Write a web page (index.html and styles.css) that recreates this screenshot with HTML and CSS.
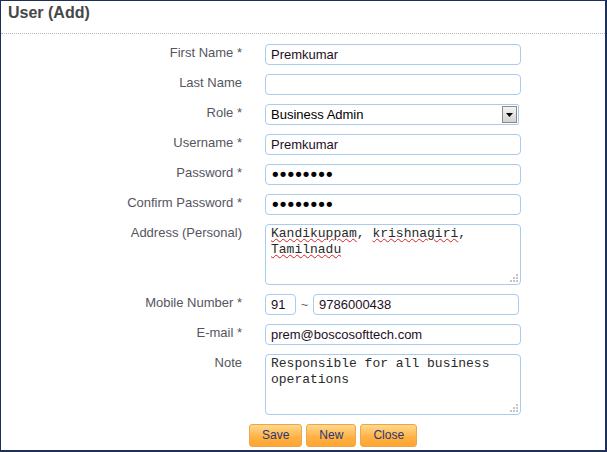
FILE: index.html
```html
<!DOCTYPE html>
<html>
<head>
<meta charset="utf-8">
<title>User (Add)</title>
<link rel="stylesheet" href="styles.css">
</head>
<body>
<div class="frame">
  <div class="header">User (Add)</div>
  <form class="form">
    <label class="lbl">First Name *</label>
    <div class="field"><input class="inp" type="text" value="Premkumar"></div>

    <label class="lbl">Last Name</label>
    <div class="field"><input class="inp" type="text" value=""></div>

    <label class="lbl">Role *</label>
    <div class="field">
      <div class="select"><span class="sel-text">Business Admin</span><span class="sel-btn"><svg width="7" height="4" viewBox="0 0 7 4"><path d="M0 0H7L3.5 4Z" fill="#000"/></svg></span></div>
    </div>

    <label class="lbl">Username *</label>
    <div class="field"><input class="inp" type="text" value="Premkumar"></div>

    <label class="lbl">Password *</label>
    <div class="field"><input class="inp pwd" type="password" value="premkuma"></div>

    <label class="lbl">Confirm Password *</label>
    <div class="field"><input class="inp pwd" type="password" value="premkuma"></div>

    <label class="lbl">Address (Personal)</label>
    <div class="field"><div class="area"><span class="sp">Kandikuppam</span>, <span class="sp">krishnagiri</span>,<br><span class="sp">Tamilnadu</span><span class="grip"><svg width="8" height="8" viewBox="0 0 8 8" fill="#c4c4c4"><rect x="6" y="0" width="2" height="2"/><rect x="3" y="3" width="2" height="2"/><rect x="6" y="3" width="2" height="2"/><rect x="0" y="6" width="2" height="2"/><rect x="3" y="6" width="2" height="2"/><rect x="6" y="6" width="2" height="2"/></svg></span></div></div>

    <label class="lbl">Mobile Number *</label>
    <div class="field mobile"><input class="inp cc" type="text" value="91"><span class="tilde">~</span><input class="inp num" type="text" value="9786000438"></div>

    <label class="lbl">E-mail *</label>
    <div class="field"><input class="inp" type="text" value="prem@boscosofttech.com"></div>

    <label class="lbl">Note</label>
    <div class="field"><div class="area">Responsible for all business<br>operations<span class="grip"><svg width="8" height="8" viewBox="0 0 8 8" fill="#c4c4c4"><rect x="6" y="0" width="2" height="2"/><rect x="3" y="3" width="2" height="2"/><rect x="6" y="3" width="2" height="2"/><rect x="0" y="6" width="2" height="2"/><rect x="3" y="6" width="2" height="2"/><rect x="6" y="6" width="2" height="2"/></svg></span></div></div>
  </form>
  <div class="buttons">
    <button class="btn" type="button">Save</button>
    <button class="btn" type="button">New</button>
    <button class="btn" type="button">Close</button>
  </div>
</div>
</body>
</html>
```

FILE: styles.css
```css
html, body {
  margin: 0;
  padding: 0;
  background: #fff;
}
body {
  font-family: "Liberation Sans", Arial, sans-serif;
}
.frame {
  width: 607px;
  height: 452px;
  box-sizing: border-box;
  border-style: solid;
  border-color: #1c3059;
  border-width: 1px 2px 2px 1px;
  overflow: hidden;
}
.header {
  height: 33px;
  box-sizing: border-box;
  padding: 2px 0 0 7px;
  font-size: 16px;
  line-height: 20px;
  font-weight: bold;
  color: #474747;
  border-bottom: 1px dotted #b8b8b8;
}
.form {
  display: grid;
  grid-template-columns: 241px 256px;
  column-gap: 23px;
  row-gap: 9px;
  padding-top: 10px;
  margin: 0;
}
.lbl {
  text-align: right;
  font-size: 13px;
  line-height: 15px;
  padding-top: 1px;
  color: #55555f;
}
.field {
  display: flex;
}
.inp {
  width: 256px;
  height: 21px;
  box-sizing: border-box;
  margin: 0;
  border: 1px solid #a9cbee;
  border-radius: 4px;
  padding: 0 5px;
  font-family: "Liberation Sans", Arial, sans-serif;
  font-size: 13px;
  line-height: 19px;
  color: #1e0f1e;
  background: #fff;
  outline: none;
}
.pwd {
  font-family: "DejaVu Sans", sans-serif;
  font-size: 18px;
  letter-spacing: -2.9px;
  color: #000;
  padding-left: 4px;
}
.select {
  width: 254px;
  height: 21px;
  box-sizing: border-box;
  border: 1px solid #a9cbee;
  border-radius: 4px 2px 2px 4px;
  display: flex;
  align-items: center;
  justify-content: space-between;
  padding: 0 1px 0 5px;
  font-size: 13px;
  color: #000;
}
.sel-text {
  line-height: 19px;
}
.sel-btn {
  width: 15px;
  height: 17px;
  box-sizing: border-box;
  border: 1px solid #8a8a8a;
  background: linear-gradient(#f4f4f4, #d2d2d2);
  display: flex;
  align-items: center;
  justify-content: center;
}
.area {
  position: relative;
  width: 256px;
  height: 61px;
  box-sizing: border-box;
  border: 1px solid #a9cbee;
  border-radius: 4px;
  padding: 1px 5px;
  font-family: "Liberation Mono", "Courier New", monospace;
  font-size: 13px;
  line-height: 16px;
  color: #2a2a2a;
}
.sp {
  text-decoration: underline wavy #e02020;
  text-decoration-thickness: 1px;
  text-underline-offset: 1px;
}
.grip {
  position: absolute;
  right: 2px;
  bottom: 2px;
  width: 8px;
  height: 8px;
  display: block;
}
.grip svg {
  display: block;
}
.mobile {
  align-items: center;
}
.cc {
  width: 31px;
}
.tilde {
  width: 17px;
  text-align: center;
  font-size: 13px;
  color: #666;
}
.num {
  width: 206px;
}
.buttons {
  display: flex;
  gap: 4px;
  margin-top: 9px;
  padding-left: 248px;
}
.btn {
  height: 23px;
  box-sizing: border-box;
  margin: 0;
  padding: 0 12px;
  border: 1px solid #eea44a;
  border-radius: 3px;
  background: linear-gradient(#ffd98e, #ffb042 60%, #ffa532);
  font-family: "Liberation Sans", Arial, sans-serif;
  font-size: 12px;
  color: #2a3775;
  line-height: 21px;
}
```
